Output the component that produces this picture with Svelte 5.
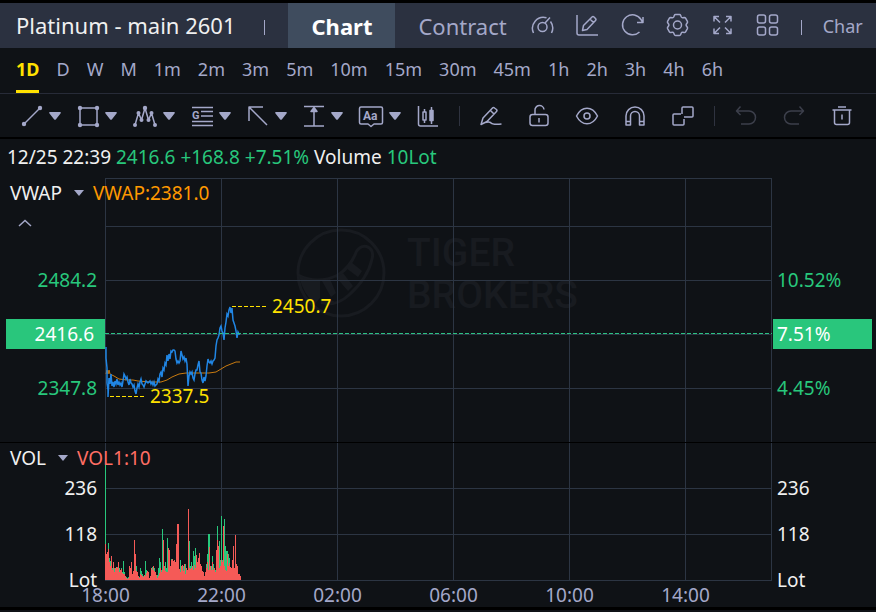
<script>
	let plotWidth = $state(667);

	const periods = ['1D', 'D', 'W', 'M', '1m', '2m', '3m', '5m', '10m', '15m', '30m', '45m', '1h', '2h', '3h', '4h', '6h'];
	let period = $state('1D');
	let tab = $state('Chart');

	// the session runs 23 hours, a label every 4
	const times = [
		{ hour: 0, label: '18:00' },
		{ hour: 4, label: '22:00' },
		{ hour: 8, label: '02:00' },
		{ hour: 12, label: '06:00' },
		{ hour: 16, label: '10:00' },
		{ hour: 20, label: '14:00' }
	];
	const xOf = (hour) => Math.round((hour / 23) * plotWidth) + 0.5;
	const scale = $derived(plotWidth / 667);

	const price = [
		[1, 169], [1, 180], [2, 190], [2, 205], [3, 212], [3, 219], [4, 200], [5, 206], [6, 196], [7, 208], [8, 204], [9, 209], [10, 203],
		[11, 206], [12, 201], [13, 207], [14, 204], [15, 207], [16, 205], [17, 209], [18, 203], [19, 196], [20, 198], [21, 201], [22, 199],
		[23, 204], [24, 207], [25, 201], [26, 205], [27, 206], [28, 209], [29, 207], [30, 213], [31, 216], [32, 210], [33, 206], [34, 209],
		[35, 204], [36, 201], [37, 206], [38, 207], [39, 209], [40, 206], [41, 203], [43, 205], [45, 203], [46, 206], [47, 204], [48, 207],
		[49, 204], [50, 208], [52, 206], [53, 201], [54, 203], [55, 196], [56, 194], [57, 199], [58, 190], [59, 192], [60, 185], [61, 187],
		[62, 177], [63, 183], [64, 176], [65, 181], [66, 173], [67, 174], [68, 172], [69, 172], [70, 173], [71, 181], [72, 185], [73, 183],
		[74, 185], [75, 183], [76, 173], [77, 177], [78, 181], [79, 179], [80, 183], [81, 180], [82, 186], [83, 208], [84, 198], [85, 194],
		[86, 196], [87, 194], [88, 200], [89, 202], [90, 196], [91, 192], [92, 192], [93, 187], [94, 183], [95, 194], [96, 195], [97, 202],
		[98, 205], [99, 199], [100, 203], [101, 198], [102, 188], [103, 181], [104, 184], [105, 185], [106, 183], [107, 186], [108, 183],
		[109, 182], [110, 180], [111, 168], [112, 162], [113, 160], [114, 157], [115, 150], [116, 148], [117, 153], [118, 155],
		[119, 162], [120, 150], [121, 144], [122, 136], [123, 138], [124, 132], [125, 129], [126, 135], [127, 130], [128, 142], [129, 145],
		[130, 148], [131, 153], [132, 160], [133, 154], [134, 156], [135, 156]
	];

	const vwap = [
		[1, 196], [2, 192], [3, 196], [4, 192], [5, 196], [9, 198], [14, 201], [22, 202], [28, 202], [33, 203], [45, 204], [56, 204], [62, 202], [67, 199],
		[74, 196], [81, 195], [88, 195], [98, 195], [104, 195], [111, 194], [116, 191], [121, 188], [126, 186], [131, 184], [135, 184]
	];

	// one bar per pixel of the session so far
	const up = [
		116, 24, 28, 37, 22, 19, 20, 12, 16, 12, 12, 12, 13, 8, 12, 6, 12, 8, 19, 8, 2, 3, 2, 3, 5, 4, 4, 4, 6, 30, 9, 14,
		6, 4, 3, 12, 9, 6, 4, 4, 19, 10, 6, 4, 2, 3, 4, 13, 9, 12, 6, 4, 5, 12, 22, 18, 10, 51, 10, 12, 18, 12, 42, 28,
		20, 12, 21, 10, 10, 12, 10, 12, 12, 8, 10, 20, 14, 11, 14, 12, 16, 6, 8, 10, 39, 14, 18, 12, 29, 24, 32, 18, 10, 18, 12, 10,
		10, 8, 6, 4, 6, 16, 26, 46, 46, 12, 14, 24, 16, 12, 10, 30, 54, 20, 39, 20, 64, 20, 12, 61, 34, 29, 29, 26, 22, 12, 12, 14,
		12, 8, 10, 14, 6, 4, 5, 2
	];
	const down = [
		36, 26, 28, 31, 18, 14, 24, 10, 18, 8, 12, 13, 12, 18, 8, 10, 11, 7, 6, 6, 4, 2, 1, 2, 14, 12, 18, 6, 9, 40, 26, 9,
		8, 4, 2, 6, 5, 4, 3, 5, 4, 7, 9, 8, 2, 4, 12, 10, 14, 9, 8, 5, 2, 4, 7, 12, 8, 10, 40, 14, 9, 8, 8, 32,
		30, 14, 20, 21, 19, 20, 18, 36, 56, 56, 11, 8, 14, 15, 9, 16, 6, 12, 10, 71, 12, 11, 12, 14, 10, 15, 12, 25, 18, 22, 27, 16,
		14, 9, 8, 4, 8, 12, 18, 10, 33, 14, 10, 18, 10, 12, 8, 30, 40, 34, 12, 14, 20, 18, 54, 14, 10, 9, 26, 14, 17, 13, 12, 20,
		34, 12, 45, 16, 14, 6, 6, 4
	];

	const line = (points) => points.map(([x, y]) => `${x * scale},${y}`).join(' ');
</script>

{#snippet caret()}
	<svg class="caret" width="12" height="8" viewBox="0 0 12 8"><path d="M1 0h10q1.500.5.5 1.500L7 7.200q-1 1-2 0L.5 1.500Q-.500.5 1 0z" fill="currentColor" /></svg>
{/snippet}

<div class="app">
	<header class="topbar">
		<h1>Platinum - main 2601</h1>
		<i class="bar"></i>
		<nav class="tabs">
			<button class:active={tab === 'Chart'} onclick={() => (tab = 'Chart')}>Chart</button>
			<button class:active={tab === 'Contract'} onclick={() => (tab = 'Contract')}>Contract</button>
		</nav>
		<div class="actions">
			<button aria-label="Indicators">
				<svg class="icon" width="25" height="24" viewBox="0 0 25 24"><path d="M3.500 20A11 11 0 0 1 16.500 4.800M20.500 8.500q4 5.500 1 11.500M15 10l5-5.500" /><circle cx="12.500" cy="14" r="4.500" /></svg>
			</button>
			<button aria-label="Draw">
				<svg class="icon" width="25" height="24" viewBox="0 0 25 24"><path d="M2 2v18q0 2 2 2h19M7.500 17.500l1-5L17 4q1-1 2 0l1.500 1.500q1 1 0 2L12 16.500zM15 6l3.500 3.500" /></svg>
			</button>
			<button aria-label="Refresh">
				<svg class="icon" width="25" height="24" viewBox="0 0 25 24"><path d="M19.500 19A10 10 0 1 1 21 6.500L22.500 9M23 4v5.500h-6" /></svg>
			</button>
			<button aria-label="Settings">
				<svg class="icon" width="25" height="24" viewBox="0 0 25 24"><path d="M10.500 1.500h4q.8 0 1.200 1l.6 1.500q.4.8 1.300.7l1.700-.2q.9 0 1.300.7l1.800 3.100q.4.800-.1 1.500l-1 1.400q-.5.800 0 1.600l1 1.400q.5.700.1 1.500l-1.800 3.100q-.4.700-1.300.7l-1.700-.2q-.9-.1-1.300.7l-.6 1.500q-.4 1-1.200 1h-4q-.8 0-1.200-1L8.700 20q-.4-.8-1.300-.7l-1.700.2q-.9 0-1.300-.7l-1.800-3.100q-.4-.8.1-1.500l1-1.400q.5-.8 0-1.600l-1-1.400q-.5-.7-.1-1.500l1.800-3.100q.4-.7 1.300-.7l1.700.2q.9.1 1.300-.7l.6-1.500q.4-1 1.200-1z" /><circle cx="12.500" cy="12" r="4" /></svg>
			</button>
			<button aria-label="Full screen">
				<svg class="icon" width="25" height="24" viewBox="0 0 25 24"><path d="M4 8.500V3.500h5M4 3.500l6 6M16 3.500h5v5M21 3.500l-6 6M4 15.500v5h5M4 20.500l6-6M21 15.500v5h-5M21 20.500l-6-6" /></svg>
			</button>
			<button aria-label="Layout">
				<svg class="icon" width="25" height="24" viewBox="0 0 25 24"><rect x="2.500" y="2" width="8" height="8" rx="2" /><rect x="14.500" y="2" width="8" height="8" rx="2" /><rect x="2.500" y="14" width="8" height="8" rx="2" /><rect x="14.500" y="14" width="8" height="8" rx="2" /></svg>
			</button>
		</div>
		<i class="bar"></i>
		<button class="more">Char</button>
	</header>

	<nav class="periods">
		{#each periods as p}
			<button class:active={period === p} onclick={() => (period = p)}>{p}</button>
		{/each}
	</nav>

	<div class="tools">
		<div class="shapes">
			<button aria-label="Line">
				<svg class="icon" width="24" height="24" viewBox="0 0 24 24"><path d="M4 20L20 4" /><g class="dots"><circle cx="4" cy="20" r="2.200" /><circle cx="20" cy="4" r="2.200" /></g></svg>
				{@render caret()}
			</button>
			<button aria-label="Rectangle">
				<svg class="icon" width="24" height="24" viewBox="0 0 24 24"><rect x="4" y="4" width="17" height="17" /><g class="dots"><circle cx="4" cy="4" r="2.200" /><circle cx="21" cy="4" r="2.200" /><circle cx="4" cy="21" r="2.200" /><circle cx="21" cy="21" r="2.200" /></g></svg>
				{@render caret()}
			</button>
			<button aria-label="Waves">
				<svg class="icon" width="26" height="24" viewBox="0 0 26 24"><path d="M3 21L6.500 9l3 7L13 4l3.500 12 3-7L23 21" /><g class="dots"><circle cx="3" cy="21" r="2" /><circle cx="6.500" cy="9" r="2" /><circle cx="9.500" cy="16" r="2" /><circle cx="13" cy="4" r="2.200" /><circle cx="16.500" cy="16" r="2" /><circle cx="19.500" cy="9" r="2" /><circle cx="23" cy="21" r="2" /></g></svg>
				{@render caret()}
			</button>
			<button aria-label="Gann and Fibonacci">
				<svg class="icon" width="24" height="24" viewBox="0 0 24 24"><path d="M2 3.500h21M11 7.500h12M11 12h12M2 17.500h21M2 21.500h21" /><text x="2" y="15" font-size="11">G</text></svg>
				{@render caret()}
			</button>
			<button aria-label="Arrow">
				<svg class="icon" width="24" height="24" viewBox="0 0 24 24"><path d="M3 17V3h14M3 3l18 18" /></svg>
				{@render caret()}
			</button>
			<button aria-label="Measure">
				<svg class="icon" width="24" height="24" viewBox="0 0 24 24"><path d="M2 2.500h20M2 22h20M12 4v18" /><path class="solid" d="M12 3.500l3 4H9z" /></svg>
				{@render caret()}
			</button>
			<button aria-label="Text">
				<svg class="icon" width="26" height="24" viewBox="0 0 26 24"><path d="M3 3h20q1.500 0 1.500 1.500v14q0 1.500-1.500 1.500h-7l-3 2.500-3-2.500H3q-1.500 0-1.500-1.500v-14Q1.500 3 3 3z" /><text x="5" y="16" font-size="12">Aa</text></svg>
				{@render caret()}
			</button>
			<button aria-label="Patterns">
				<svg class="icon" width="24" height="24" viewBox="0 0 24 24"><path d="M2.500 2v18q0 2 2 2H22M8.500 5v3M8.500 16v3M15.500 3v17" /><rect x="7" y="8" width="3" height="8" /><rect class="solid" x="14" y="6.500" width="3" height="10" /></svg>
			</button>
		</div>
		<i class="divider"></i>
		<div class="edit">
			<button aria-label="Freehand">
				<svg class="icon" width="24" height="24" viewBox="0 0 24 24"><path d="M2 20.500l2-6.500L13.500 4q1-1 2 0l2 1.500q1 1 0 2L8 17.500zM11.500 6.500L15 10M2 20.500q6.500-3.500 9.500-2 2 2.500 11 1.500" /></svg>
			</button>
			<button aria-label="Lock">
				<svg class="icon" width="24" height="24" viewBox="0 0 24 24"><rect x="3" y="10.500" width="18" height="11" rx="2.500" /><path d="M8 10V6.500a4.500 4.500 0 0 1 9-1M12 14v4.500" /></svg>
			</button>
			<button aria-label="Show drawings">
				<svg class="icon" width="24" height="24" viewBox="0 0 24 24"><path d="M1.500 12q4-7.800 10.500-7.800T22.500 12q-4 7.800-10.500 7.800T1.500 12z" /><circle cx="12" cy="12" r="3" /></svg>
			</button>
			<button aria-label="Magnet">
				<svg class="icon" width="24" height="24" viewBox="0 0 24 24"><path d="M3 21v-9a9 9 0 0 1 18 0v9h-4.500v-9a4.500 4.500 0 0 0-9 0v9zM3 17.500h4.500M16.500 17.500H21" /></svg>
			</button>
			<button aria-label="Link charts">
				<svg class="icon" width="24" height="24" viewBox="0 0 24 24"><path d="M11 10V4q0-1 1-1h9q1 0 1 1v8q0 1-1 1h-8M10 10H3q-1 0-1 1v9q0 1 1 1h9q1 0 1-1v-5" /></svg>
			</button>
		</div>
		<i class="divider"></i>
		<div class="edit">
			<button aria-label="Undo" disabled>
				<svg class="icon" width="24" height="24" viewBox="0 0 24 24"><path d="M6.500 2.500L2.500 7l4 4M2.500 7H15a6.500 6.500 0 0 1 0 13H7" /></svg>
			</button>
			<button aria-label="Redo" disabled>
				<svg class="icon" width="24" height="24" viewBox="0 0 24 24"><path d="M17.500 2.500L21.500 7l-4 4M21.500 7H9a6.500 6.500 0 0 0 0 13h8" /></svg>
			</button>
			<button aria-label="Delete">
				<svg class="icon" width="24" height="24" viewBox="0 0 24 24"><path d="M2.500 6h19M8 3h8M4.500 6v12.500q0 2 2 2h11q2 0 2-2V6M12 10.500v5" /></svg>
			</button>
		</div>
	</div>

	<main class="chart">
		<p class="summary">12/25 22:39 <b>2416.6</b> <b>+168.8</b> <b>+7.51%</b> Volume <b>10Lot</b></p>

		<section class="pane">
			<div class="left">
				<div class="legend">
					<button>VWAP <svg width="10" height="6" viewBox="0 0 10 6"><path d="M0 0h10L5 6z" fill="#a4a8c9" /></svg></button>
					<span class="vwap">VWAP:2381.0</span>
				</div>
				<button class="fold" aria-label="Collapse">
					<svg width="14" height="8" viewBox="0 0 14 8"><path d="M1 7l6-5.500L13 7" fill="none" stroke="#a4a8c9" stroke-width="1.500" /></svg>
				</button>
				<div class="levels">
					<span>2484.2</span>
					<span class="tag">2416.6</span>
					<span>2347.8</span>
				</div>
			</div>
			<div class="plot" bind:clientWidth={plotWidth}>
				<svg width="100%" height="264">
					<g class="mark" transform="translate({Math.round(plotWidth / 2) - 144} 50)">
						<circle cx="46" cy="45" r="43" />
						<path class="paw" d="M3 47Q22 57 43 47 54 40 60 27C64 13 81 17 77 31Q73 50 54 67 43 77 30 76" />
						<path class="stripe" d="M4 48Q20 56 35 51L41 65 36 69 27 53 25 53V70L20 76Q8 66 4 48zM41 49l7-4 10 13-5 5zM51 40l5-6 11 9-4 6zM26 72q10-1 14 2-6 4-14 2z" />
						<text x="112" y="38">TIGER</text>
						<text x="112" y="80">BROKERS</text>
					</g>
					<g class="grid">
						{#each times as t}
							<line x1={xOf(t.hour)} x2={xOf(t.hour)} y1="0" y2="264" />
						{/each}
						<line x1={plotWidth - 0.5} x2={plotWidth - 0.5} y1="0" y2="264" />
						{#each [0.5, 48.5, 102.5, 156.5, 210.5] as y}
							<line x1="0" x2={plotWidth} y1={y} y2={y} />
						{/each}
					</g>
					<polyline class="average" points={line(vwap)} />
					<polyline class="price" points={line(price)} />
					<line class="last" x1="0" x2={plotWidth} y1="155.500" y2="155.500" />
					<line class="peak" x1={127 * scale} x2={127 * scale + 35} y1="128.500" y2="128.500" />
					<line class="peak" x1={5 * scale} x2={5 * scale + 34} y1="218.500" y2="218.500" />
					<text class="note" x={127 * scale + 40} y="135">2450.7</text>
					<text class="note" x={5 * scale + 40} y="225">2337.5</text>
				</svg>
			</div>
			<div class="right">
				<span>10.52%</span>
				<span class="tag">7.51%</span>
				<span>4.45%</span>
			</div>
		</section>

		<section class="pane volume">
			<div class="left">
				<div class="legend">
					<button>VOL <svg width="10" height="6" viewBox="0 0 10 6"><path d="M0 0h10L5 6z" fill="#a4a8c9" /></svg></button>
					<span class="vol">VOL1:10</span>
				</div>
				<div class="levels">
					<span>236</span>
					<span>118</span>
					<span>Lot</span>
				</div>
			</div>
			<div class="plot">
				<svg width="100%" height="164">
					<g class="grid">
						{#each times as t}
							<line x1={xOf(t.hour)} x2={xOf(t.hour)} y1="0" y2="138" />
						{/each}
						<line x1={plotWidth - 0.5} x2={plotWidth - 0.5} y1="0" y2="138" />
						{#each [45.5, 91.5, 137.5] as y}
							<line x1="0" x2={plotWidth} y1={y} y2={y} />
						{/each}
					</g>
					{#each up as h, i}
						<rect class="up" x={i * scale} y={137 - h} width={scale} height={h} />
						<rect class="down" x={i * scale} y={137 - down[i]} width={scale} height={down[i]} />
					{/each}
					{#each times as t}
						<text class="time" x={xOf(t.hour)} y="159">{t.label}</text>
					{/each}
				</svg>
			</div>
			<div class="right">
				<span>236</span>
				<span>118</span>
				<span>Lot</span>
			</div>
		</section>
	</main>
</div>

<style>
	:global(body) {
		background: #0f1216;
	}
	.app {
		font-family: "Noto Sans", "Open Sans", sans-serif;
		font-size: 19px;
		line-height: 26px;
		color: #f0f0f0;
		background: #0f1216;
		border-top: 3px solid #000;
		border-bottom: 3px solid #000;
		overflow: hidden;
	}
	button {
		font: inherit;
		color: #a4a8c9;
		background: none;
		border: 0;
		padding: 0;
		cursor: pointer;
	}
	.icon {
		display: block;
		fill: none;
		stroke: currentColor;
		stroke-width: 1.5;
		stroke-linejoin: round;
	}
	.icon text {
		font-family: Roboto, sans-serif;
		font-weight: 700;
		fill: currentColor;
		stroke: none;
	}
	.dots, .solid {
		fill: currentColor;
	}
	.dots {
		stroke: none;
	}

	.topbar {
		display: flex;
		align-items: center;
		height: 45px;
		padding: 0 16px;
		background: #2b3140;
		white-space: nowrap;
	}
	h1 {
		margin: 0;
		flex: none;
		padding-bottom: 2px;
		font-size: 22px;
		font-weight: 400;
	}
	.bar {
		flex: none;
		width: 1px;
		height: 15px;
		margin-top: 3px;
		margin-left: 29px;
		background: #a4a8c9;
	}
	.tabs {
		display: flex;
		align-self: stretch;
		margin-left: 23px;
	}
	.tabs button {
		padding: 0 23px;
		font-size: 22px;
	}
	.tabs .active {
		color: #fff;
		font-weight: 700;
		background: #3f4c5e;
	}
	.actions {
		display: flex;
		gap: 20px;
		padding-bottom: 2px;
	}
	.actions + .bar {
		margin-left: 21px;
	}
	.more {
		margin-left: 21px;
		font-size: 18px;
	}

	.periods {
		display: flex;
		gap: 17px;
		height: 45px;
		padding: 0 16px;
		border-bottom: 1px solid #272b38;
	}
	.periods button {
		border-bottom: 3px solid transparent;
		font-size: 18px;
	}
	.periods .active {
		color: #ffe100;
		border-color: #ffe100;
		font-weight: 700;
	}

	.tools {
		display: flex;
		align-items: center;
		height: 43px;
		padding: 0 20px;
		border-bottom: 2px solid #000;
	}
	.shapes, .edit {
		display: flex;
		gap: 16px;
	}
	.shapes button {
		display: flex;
		align-items: center;
		gap: 5px;
	}
	.shapes {
		gap: 15px;
	}
	.edit {
		gap: 24px;
	}
	.edit :disabled {
		color: #3c3f4b;
	}
	.divider {
		width: 1px;
		height: 20px;
		margin: 0 19px;
		background: #2f3340;
	}

	.summary {
		margin: 0;
		height: 39px;
		padding-left: 7px;
		line-height: 37px;
	}
	.summary b {
		color: #28c77c;
		font-weight: 400;
	}
	.pane {
		display: grid;
		grid-template-columns: 105px 1fr 104px;
		color: #28c77c;
	}
	.volume {
		border-top: 1px solid #000;
		color: #f0f0f0;
	}
	.plot svg {
		display: block;
		overflow: visible;
	}
	.left {
		position: relative;
		z-index: 1;
	}
	.legend {
		display: flex;
		gap: 9px;
		height: 30px;
		padding-left: 10px;
		line-height: 30px;
		white-space: nowrap;
	}
	.legend button {
		display: flex;
		align-items: center;
		gap: 12px;
		color: #f0f0f0;
	}
	.vwap {
		color: #ff9900;
	}
	.vol {
		color: #ff6e64;
	}
	.fold {
		display: block;
		height: 30px;
		padding-left: 18px;
		line-height: 0;
	}
	.levels, .right {
		display: grid;
		grid-auto-rows: 54px;
		align-items: center;
		align-content: start;
	}
	.levels {
		padding: 15px 0 0 6px;
		text-align: right;
	}
	.right {
		padding: 75px 4px 0 1px;
	}
	.levels span {
		padding-right: 8px;
	}
	.right span {
		padding-left: 4px;
	}
	.levels .tag, .right .tag {
		color: #fff;
		background: #29c67c;
		line-height: 30px;
	}
	.levels .tag {
		padding-right: 11px;
	}
	.volume .levels, .volume .right {
		grid-auto-rows: 46px;
	}
	.volume .levels {
		padding-top: 0;
		margin-top: -8px;
	}
	.volume .right {
		padding-top: 22px;
	}

	.grid line {
		stroke: #2c3543;
	}
	.mark circle, .mark .paw {
		fill: none;
		stroke: #181b20;
		stroke-width: 3;
	}
	.mark .stripe {
		fill: #181b20;
	}
	.mark text {
		font: 500 39px Roboto, sans-serif;
		fill: #181b20;
	}
	.average, .price {
		fill: none;
		stroke: #c87a10;
	}
	.price {
		stroke: #2186e4;
		stroke-width: 1.5;
	}
	.last {
		stroke: #2cc184;
		stroke-dasharray: 4 2;
	}
	.peak {
		stroke: #ffe100;
		stroke-dasharray: 4 2;
	}
	.note {
		fill: #ffe100;
	}
	.up {
		fill: #28c77c;
	}
	.down {
		fill: #f55a57;
	}
	.time {
		fill: #a4a8c9;
		text-anchor: middle;
	}
</style>
